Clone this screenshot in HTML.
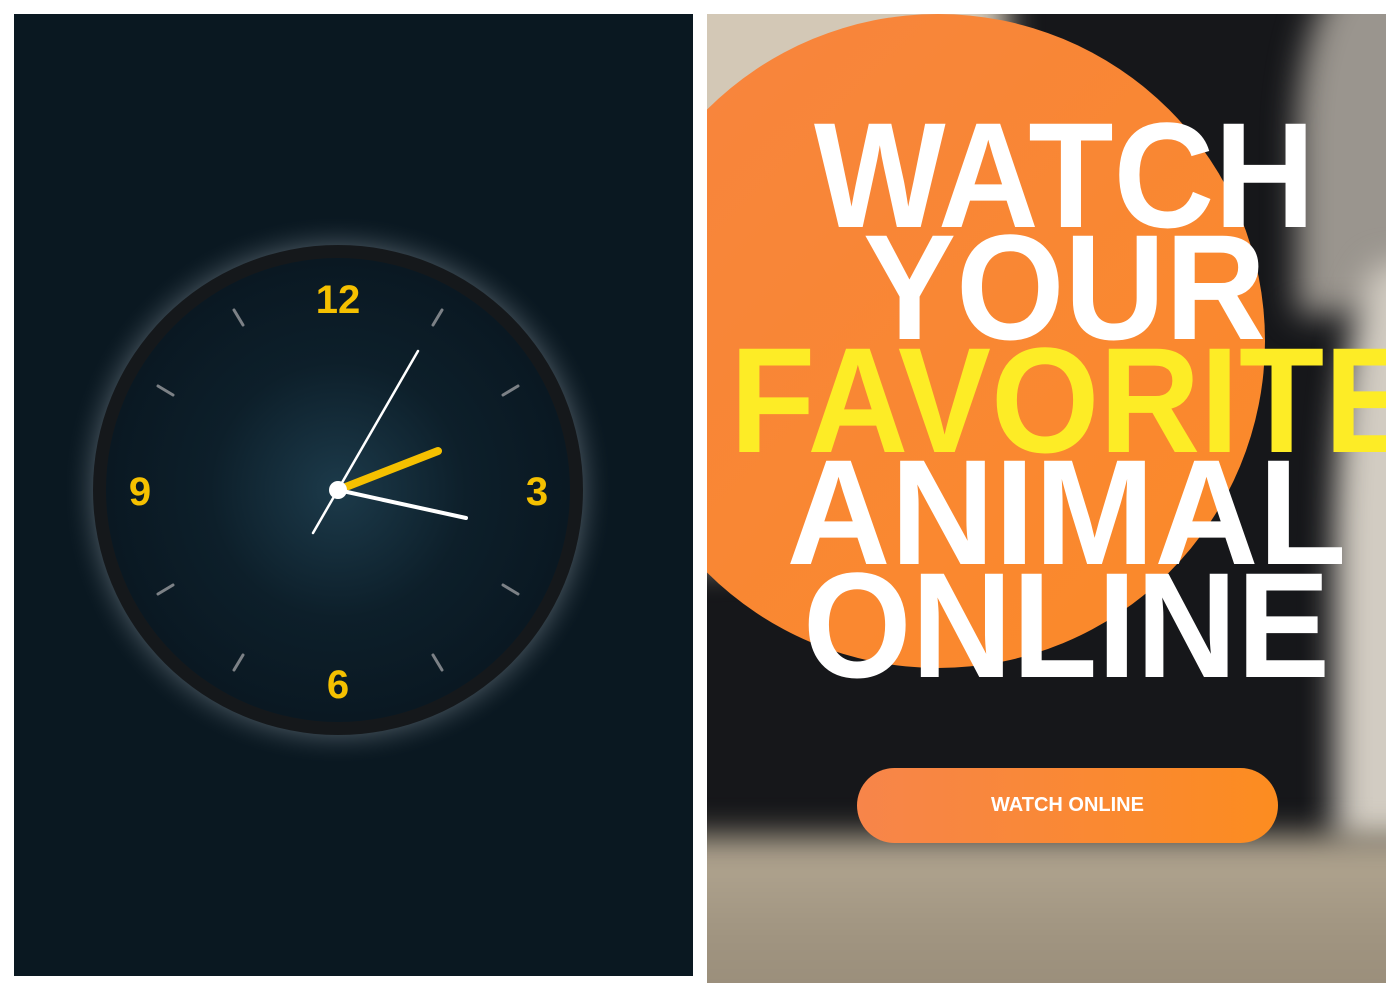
<!DOCTYPE html>
<html><head><meta charset="utf-8"><style>
html,body{margin:0;padding:0;background:#fff;width:1400px;height:1000px;overflow:hidden;font-family:"Liberation Sans",sans-serif}
.left{position:absolute;left:14px;top:14px;width:679px;height:962px;background:#0a1821;overflow:hidden}
.right{position:absolute;left:707px;top:14px;width:679px;height:969px;overflow:hidden;background:#16171a}
.bg{position:absolute;filter:blur(16px)}
.circle{position:absolute;left:-96px;top:0;width:654px;height:654px;border-radius:50%;background:linear-gradient(135deg,#f7843f,#fb8a28)}
.t{position:absolute;left:18px;width:679px;text-align:center;font-weight:700;font-size:150px;line-height:112.5px;color:#fff;white-space:nowrap}
.t div{transform:scaleX(0.93);transform-origin:center}
.btn{position:absolute;left:150px;top:754px;width:421px;height:75px;border-radius:38px;background:linear-gradient(90deg,#f7854a,#fc8c20);color:#fff;font-weight:700;font-size:20px;line-height:75px;text-align:center}
</style></head><body>
<div class="left">
<svg width="679" height="962" viewBox="14 14 679 962" style="position:absolute;left:0;top:0">
<defs>
<radialGradient id="face" cx="338" cy="490" r="232" gradientUnits="userSpaceOnUse">
<stop offset="0" stop-color="#1c3a4a"/><stop offset="0.55" stop-color="#0d1f2a"/><stop offset="1" stop-color="#0a1822"/></radialGradient>
<radialGradient id="glow" cx="338" cy="490" r="275" gradientUnits="userSpaceOnUse">
<stop offset="0.85" stop-color="#8a96a0" stop-opacity="0.55"/><stop offset="1" stop-color="#0a1821" stop-opacity="0"/></radialGradient>
</defs>
<circle cx="338" cy="490" r="275" fill="url(#glow)"/>
<circle cx="338" cy="490" r="245" fill="#15181b"/>
<circle cx="338" cy="490" r="232" fill="url(#face)"/>
<g stroke="#7c8186" stroke-width="3" stroke-linecap="round">
<line x1="433" y1="325" x2="442" y2="310"/>
<line x1="503" y1="395" x2="518" y2="386"/>
<line x1="503" y1="585" x2="518" y2="594"/>
<line x1="433" y1="655" x2="442" y2="670"/>
<line x1="243" y1="655" x2="234" y2="670"/>
<line x1="173" y1="585" x2="158" y2="594"/>
<line x1="173" y1="395" x2="158" y2="386"/>
<line x1="243" y1="325" x2="234" y2="310"/>
</g>
<g fill="#f5c000" font-family="Liberation Sans,sans-serif" font-weight="700" font-size="40" text-anchor="middle">
<text x="338" y="313">12</text>
<text x="537" y="505">3</text>
<text x="338" y="698">6</text>
<text x="140" y="505">9</text>
</g>
<line x1="313" y1="533" x2="418" y2="351" stroke="#fff" stroke-width="2.5" stroke-linecap="round"/>
<line x1="338" y1="490" x2="438" y2="451" stroke="#f5c000" stroke-width="8" stroke-linecap="round"/>
<line x1="338" y1="490" x2="466" y2="518" stroke="#fff" stroke-width="4" stroke-linecap="round"/>
<circle cx="338" cy="490" r="9" fill="#fff"/>
</svg>
</div>
<div class="right">
<div class="bg" style="left:-50px;top:-50px;width:350px;height:230px;background:#d3c8b6;border-radius:0 0 60% 0"></div>
<div class="bg" style="left:-50px;top:150px;width:90px;height:400px;background:#c9bfae"></div>
<div class="bg" style="left:590px;top:-50px;width:140px;height:350px;background:#9a958e;border-radius:50% 0 0 0"></div>
<div class="bg" style="left:628px;top:250px;width:100px;height:580px;background:#d2ccc2;border-radius:50% 0 0 0"></div>
<div class="bg" style="left:-50px;top:822px;width:780px;height:200px;background:linear-gradient(180deg,#b4a893,#a09480 50%,#968a77)"></div>
<div class="circle"></div>
<div class="t" style="top:105px"><div>WATCH</div></div>
<div class="t" style="top:217px"><div>YOUR</div></div>
<div class="t" style="top:330px;left:23px;text-align:left;color:#fdec26"><div style="transform-origin:left">FAVORITE</div></div>
<div class="t" style="top:442px;left:20px"><div style="transform:scaleX(0.96)">ANIMAL</div></div>
<div class="t" style="top:555px;left:20px"><div>ONLINE</div></div>
<div class="btn">WATCH ONLINE</div>
</div>
</body></html>
